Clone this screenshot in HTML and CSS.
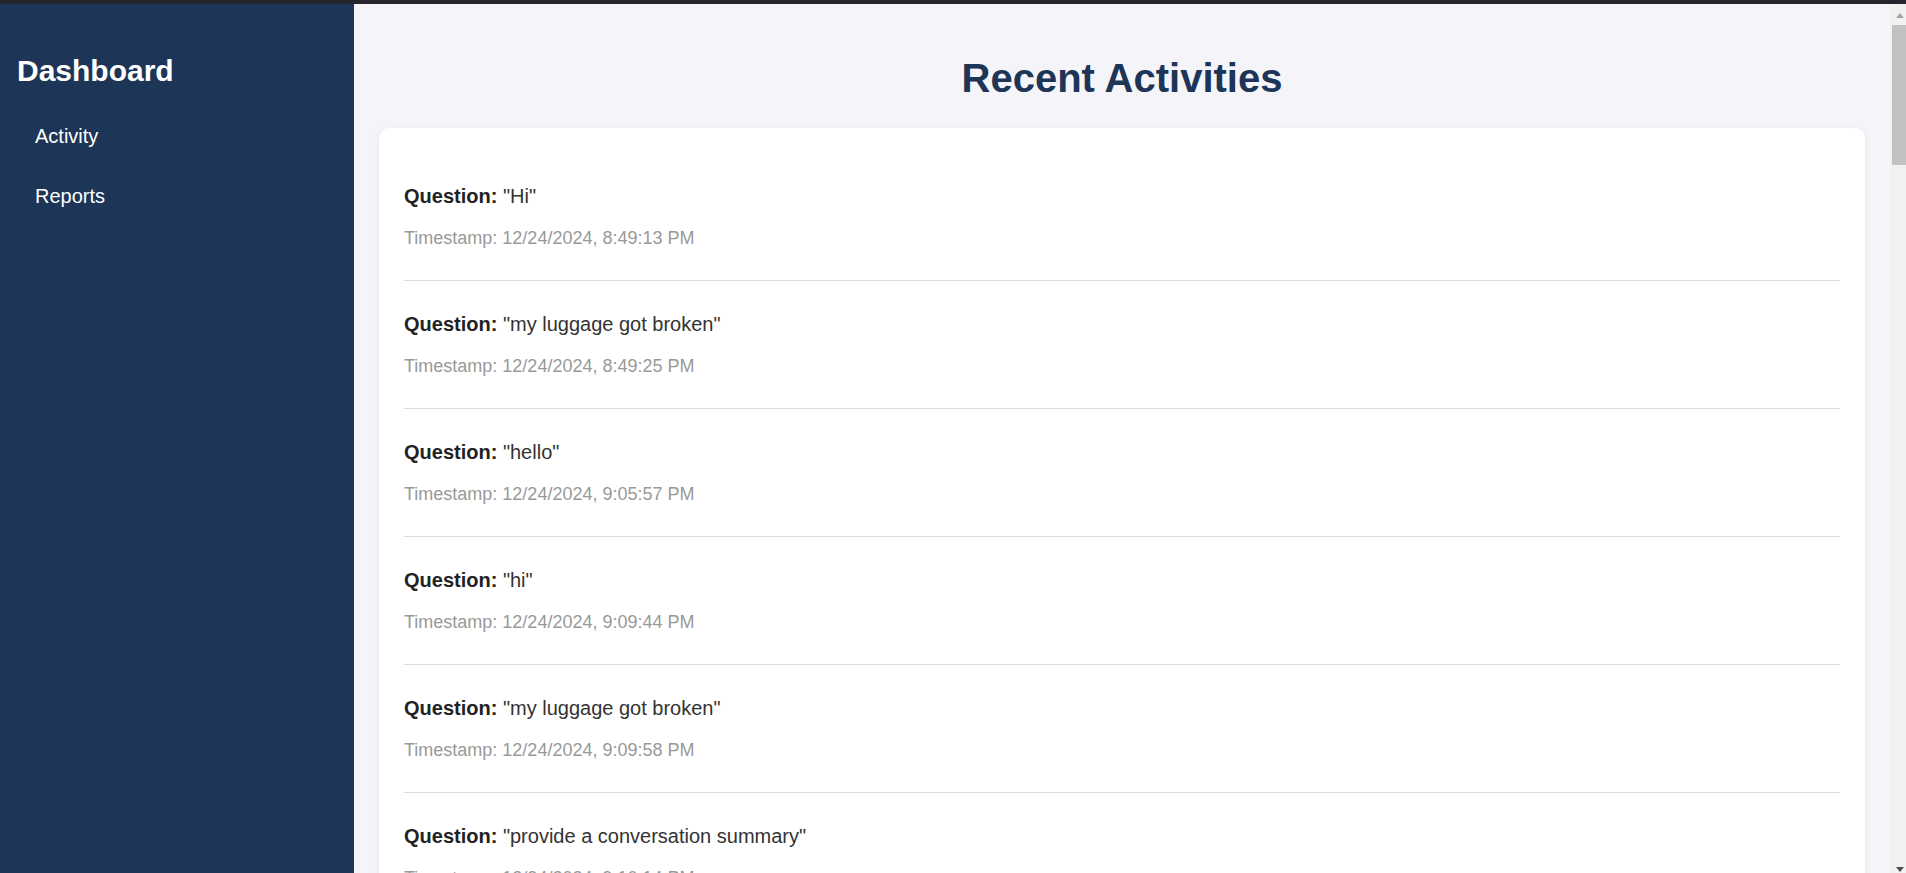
FILE: index.html
```html
<!DOCTYPE html>
<html lang="en">
<head>
<meta charset="utf-8">
<title>Dashboard</title>
<link rel="stylesheet" href="styles.css">
</head>
<body>
<div class="topbar"></div>
<div class="window">
<div class="viewport">
  <div class="layout">
    <aside class="sidebar">
      <h2 class="brand">Dashboard</h2>
      <ul class="nav">
        <li class="nav-item"><a class="nav-link" href="#">Activity</a></li>
        <li class="nav-item"><a class="nav-link" href="#">Reports</a></li>
      </ul>
    </aside>
    <main class="main">
      <h1 class="title">Recent Activities</h1>
      <div class="card">
        <div class="item"><p class="q"><strong>Question:</strong> "Hi"</p><p class="ts">Timestamp: 12/24/2024, 8:49:13 PM</p></div>
        <div class="item"><p class="q"><strong>Question:</strong> "my luggage got broken"</p><p class="ts">Timestamp: 12/24/2024, 8:49:25 PM</p></div>
        <div class="item"><p class="q"><strong>Question:</strong> "hello"</p><p class="ts">Timestamp: 12/24/2024, 9:05:57 PM</p></div>
        <div class="item"><p class="q"><strong>Question:</strong> "hi"</p><p class="ts">Timestamp: 12/24/2024, 9:09:44 PM</p></div>
        <div class="item"><p class="q"><strong>Question:</strong> "my luggage got broken"</p><p class="ts">Timestamp: 12/24/2024, 9:09:58 PM</p></div>
        <div class="item"><p class="q"><strong>Question:</strong> "provide a conversation summary"</p><p class="ts">Timestamp: 12/24/2024, 9:10:14 PM</p></div>
        <div class="item"><p class="q"><strong>Question:</strong> "hi"</p><p class="ts">Timestamp: 12/24/2024, 9:15:02 PM</p></div>
        <div class="item"><p class="q"><strong>Question:</strong> "my flight was delayed"</p><p class="ts">Timestamp: 12/24/2024, 9:15:20 PM</p></div>
        <div class="item"><p class="q"><strong>Question:</strong> "can I get a refund?"</p><p class="ts">Timestamp: 12/24/2024, 9:15:41 PM</p></div>
        <div class="item"><p class="q"><strong>Question:</strong> "provide a conversation summary"</p><p class="ts">Timestamp: 12/24/2024, 9:16:03 PM</p></div>
      </div>
    </main>
  </div>
</div>
<div class="scrollbar" aria-hidden="true">
  <div class="sb-btn sb-up"><span class="arrow-up"></span></div>
  <div class="sb-thumb"></div>
  <div class="sb-track"></div>
  <div class="sb-btn sb-down"><span class="arrow-down"></span></div>
</div>
</div>
</body>
</html>
```
FILE: styles.css
```css
html, body {
  margin: 0;
  padding: 0;
  height: 100%;
  overflow: hidden;
}

body {
  font-family: "Liberation Sans", Arial, sans-serif;
  background: #26252b;
  display: flex;
  flex-direction: column;
}

.topbar {
  height: 4px;
  flex: 0 0 4px;
  background: #26252b;
}

.window {
  flex: 1 1 auto;
  min-height: 0;
  display: flex;
}

.viewport {
  flex: 1 1 auto;
  min-width: 0;
  overflow: hidden;
  background: #f4f4f9;
}

/* fake classic scrollbar */
.scrollbar {
  flex: 0 0 16px;
  width: 16px;
  background: #f1f1f1;
  display: flex;
  flex-direction: column;
}

.sb-btn {
  flex: 0 0 21px;
  height: 21px;
  box-sizing: border-box;
  display: flex;
  padding-left: 6px;
}

.sb-up {
  align-items: flex-start;
  padding-top: 9px;
}

.sb-down {
  align-items: flex-end;
  padding-bottom: 1px;
}

.arrow-up {
  width: 0;
  height: 0;
  border-left: 4px solid transparent;
  border-right: 4px solid transparent;
  border-bottom: 5px solid #a3a3a3;
}

.arrow-down {
  width: 0;
  height: 0;
  border-left: 4.5px solid transparent;
  border-right: 4.5px solid transparent;
  border-top: 5px solid #505050;
}

.sb-thumb {
  flex: 0 0 140px;
  margin-left: 2px;
  background: #c1c1c1;
}

.sb-track {
  flex: 1 1 auto;
}

.layout {
  display: flex;
  align-items: stretch;
  min-height: 100%;
}

.sidebar {
  flex: 0 0 354px;
  width: 354px;
  box-sizing: border-box;
  background: #1d3557;
  color: #ffffff;
  padding: 25px 15px 25px 17px;
}

.brand {
  margin: 25px 0 25px;
  font-size: 30px;
  font-weight: bold;
  line-height: 34px;
  color: #ffffff;
}

.nav {
  list-style: none;
  margin: 0;
  padding: 0;
}

.nav-item {
  margin-bottom: 13px;
}

.nav-link {
  display: block;
  padding: 12px 18px;
  font-size: 20px;
  line-height: 23px;
  color: #ffffff;
  text-decoration: none;
}

.main {
  flex: 1 1 auto;
  padding: 25px;
  background: #f4f4f9;
}

.title {
  margin: 26px 0 27px;
  text-align: center;
  font-size: 40px;
  line-height: 46px;
  font-weight: bold;
  color: #1d3557;
}

.card {
  background: #ffffff;
  border-radius: 10px;
  padding: 25px;
  box-shadow: 0 2px 6px rgba(0, 0, 0, 0.07);
}

.item {
  padding: 32px 0;
  border-bottom: 1px solid #dddddd;
}

.q {
  margin: 0 0 20px;
  font-size: 20px;
  line-height: 23px;
  color: #333333;
}

.q strong {
  color: #222222;
}

.ts {
  margin: 0;
  font-size: 18px;
  line-height: 20px;
  color: #999999;
}
```
